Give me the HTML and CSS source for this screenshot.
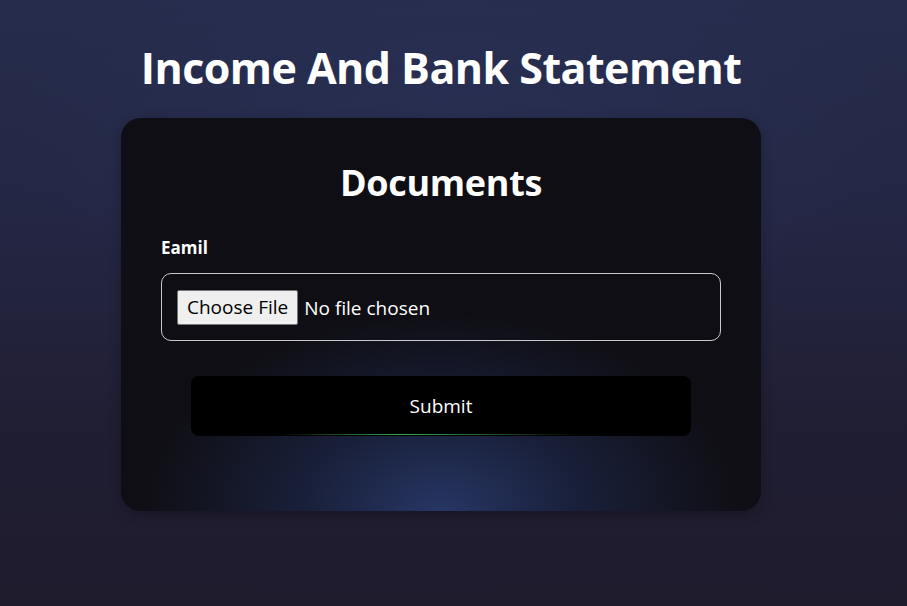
FILE: index.html
```html
<!DOCTYPE html>
<html lang="en">
<head>
<meta charset="utf-8">
<title>Income And Bank Statement</title>
<link rel="stylesheet" href="styles.css">
</head>
<body>
<main class="page">
  <h1 class="title">Income And Bank Statement</h1>
  <form class="card">
    <h2 class="card-title">Documents</h2>
    <label class="label" for="file">Eamil</label>
    <div class="file-box">
      <input class="file-input" id="file" type="file">
    </div>
    <button class="submit" type="button">Submit</button>
  </form>
</main>
</body>
</html>
```
FILE: styles.css
```css
* { box-sizing: border-box; }
html, body { height: 100%; }
body {
  margin: 0;
  font-family: "Open Sans", "Noto Sans", sans-serif;
  color: #fff;
  background:
    radial-gradient(ellipse 70% 50% at 50% 20%, rgba(42,50,88,0.6), rgba(42,50,88,0) 70%),
    linear-gradient(180deg, #262c4c 0%, #242744 35%, #201e33 70%, #1f1c2e 100%);
}
.page {
  display: flex;
  flex-direction: column;
  align-items: center;
  padding-top: 38px;
  padding-right: 25px;
}
.title {
  margin: 0;
  font-size: 43px;
  font-weight: 700;
  line-height: 60px;
  letter-spacing: -0.55px;
}
.card {
  margin-top: 20px;
  width: 640px;
  height: 393px;
  border-radius: 20px;
  padding: 40px 40px 0;
  display: flex;
  flex-direction: column;
  background:
    radial-gradient(ellipse 300px 200px at 50% 100%, rgba(40,56,104,0.95), rgba(32,44,84,0.6) 45%, rgba(15,14,20,0) 100%),
    #0f0e14;
  box-shadow: 0 4px 12px rgba(0,0,0,0.25);
}
.card-title {
  margin: 0;
  text-align: center;
  font-size: 36px;
  font-weight: 700;
  line-height: 50px;
  letter-spacing: -0.3px;
}
.label {
  margin-top: 28px;
  font-size: 17px;
  font-weight: 700;
  line-height: 24px;
}
.file-box {
  margin-top: 13px;
  height: 68px;
  border: 1px solid #c9c9cc;
  border-radius: 10px;
  display: flex;
  align-items: center;
  padding: 0 15px;
}
.file-input {
  font-family: inherit;
  font-size: 19px;
  color: #fff;
}
.file-input::file-selector-button {
  font-family: inherit;
  font-size: 19px;
  color: #000;
  background: #efefef;
  border: 1px solid #767676;
  border-radius: 2px;
  padding: 1px 9px;
  height: 35px;
  margin-right: 6px;
}
.submit {
  position: relative;
  align-self: center;
  margin-top: 35px;
  width: 500px;
  height: 60px;
  border: none;
  border-radius: 8px;
  background: #000;
  color: #fff;
  font-family: inherit;
  font-size: 19px;
  overflow: hidden;
}
.submit::after {
  content: "";
  position: absolute;
  left: 18%;
  right: 22%;
  bottom: 1px;
  height: 1px;
  background: linear-gradient(90deg, rgba(60,190,90,0), rgba(70,200,100,0.85) 40%, rgba(60,190,90,0));
}
```
